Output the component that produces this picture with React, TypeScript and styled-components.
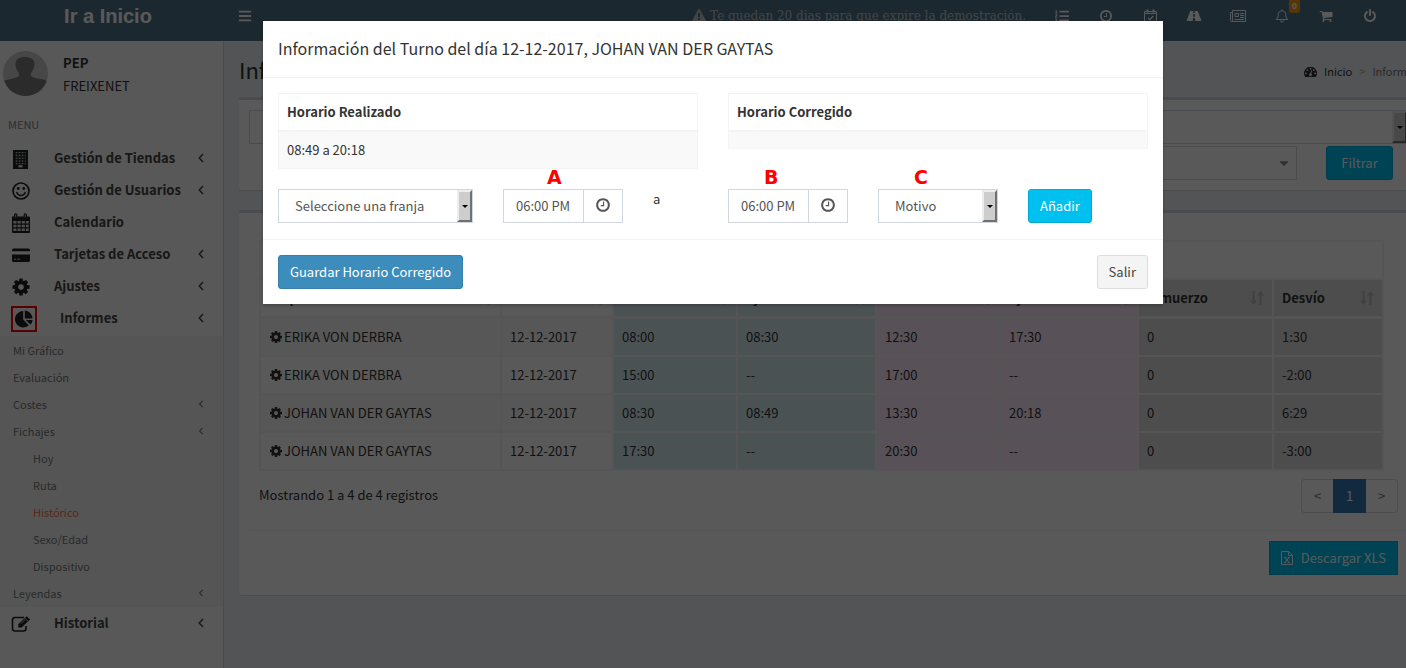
import React from 'react';
import styled, { createGlobalStyle } from 'styled-components';
import { FaBars, FaListOl, FaCaretDown } from 'react-icons/fa';

const Global = createGlobalStyle`
  * { box-sizing: border-box; }
  html, body { margin: 0; min-height: 100%; background: #ecf0f5; overflow: hidden; }
  body, button, input, select {
    font-family: "Noto Sans CJK SC", "Open Sans", sans-serif;
    font-size: 13px;
    line-height: 20px;
    color: #333;
  }
  button, select { margin: 0; cursor: pointer; }
  a { color: inherit; text-decoration: none; }
`;

/* ---------- icons ---------- */

type GlyphProps = { d: string; size?: number };
const Glyph = ({ d, size = 14 }: GlyphProps) => (
  <svg width={size} height={size} viewBox="0 0 1792 1792" fill="currentColor" aria-hidden="true">
    <path d={d} />
  </svg>
);

const COG =
  'M1152 896q0-106-75-181t-181-75-181 75-75 181 75 181 181 75 181-75 75-181zm512-109v222q0 12-8 23t-20 13l-185 28q-19 54-39 91 35 50 107 138 10 12 10 25t-9 23q-27 37-99 108t-94 71q-12 0-26-9l-138-108q-44 23-91 38-16 136-29 186-7 28-36 28H785q-14 0-24.500-8.500T749 1635l-28-184q-49-16-90-37l-141 107q-10 9-25 9-14 0-25-11-126-114-165-168-7-10-7-23 0-12 8-23 15-21 51-66.500t54-70.500q-27-50-41-99l-183-27q-13-2-21-12.500t-8-23.500V783q0-12 8-23t19-13l186-28q14-46 39-92-40-57-107-138-10-12-10-24 0-10 9-23 26-36 98.500-107.500T465 263q13 0 26 10l138 107q44-23 91-38 16-136 29-186 7-28 36-28h222q14 0 24.500 8.500T1043 157l28 184q49 16 90 37l142-107q9-9 24-9 13 0 25 10 129 119 165 170 7 8 7 22 0 12-8 23-15 21-51 66.500t-54 70.500q26 50 41 98l183 28q13 2 21 12.500t8 23.500z';
const CLOCK =
  'M1024 544v448q0 14-9 23t-23 9H672q-14 0-23-9t-9-23v-64q0-14 9-23t23-9h224V544q0-14 9-23t23-9h64q14 0 23 9t9 23zm416 352q0-148-73-273t-198-198-273-73-273 73-198 198-73 273 73 273 198 198 273 73 273-73 198-198 73-273zm224 0q0 209-103 385.500T1281.500 1561 896 1664t-385.500-103T231 1281.500 128 896t103-385.500T510.500 231 896 128t385.500 103T1561 510.500 1664 896z';
const WARNING =
  'M1024 1375v-190q0-14-9.500-23.500T992 1152H800q-13 0-22.500 9.500T768 1185v190q0 14 9.500 23.500t22.500 9.500h192q13 0 22.500-9.500t9.500-23.500zm-2-374l18-459q0-12-10-19-13-11-24-11H786q-11 0-24 11-10 7-10 21l17 457q0 10 10 16.500t24 6.500h185q14 0 23.500-6.500t10.500-16.500zm-14-934l768 1408q35 63-2 126-17 29-46.500 46t-63.500 17H128q-34 0-63.500-17T18 1601q-37-63-2-126L784 67q17-31 47-49t65-18 65 18 47 49z';
const CART =
  'M704 1536q0 52-38 90t-90 38-90-38-38-90 38-90 90-38 90 38 38 90zm896 0q0 52-38 90t-90 38-90-38-38-90 38-90 90-38 90 38 38 90zm128-1088v512q0 24-16.500 42.500T1671 1024L627 1146q13 60 13 70 0 16-24 64h920q26 0 45 19t19 45-19 45-45 19H512q-26 0-45-19t-19-45q0-11 8-31.500t16-36 21.500-40T509 1207L332 384H128q-26 0-45-19t-19-45 19-45 45-19h256q16 0 28.500 6.500T432 278t13 24.500 8 26 5.500 29.500 4.500 26h1201q26 0 45 19t19 45z';
const POWER =
  'M1664 896q0 156-61 298t-164 245-245 164-298 61-298-61-245-164-164-245-61-298q0-182 80.500-343T435 283q43-32 95.500-25t83.500 50q32 42 24.500 94.500T589 489q-98 74-151.500 181T384 896q0 104 40.500 198.500T534 1258t163.500 109.500T896 1408t198.500-40.500T1258 1258t109.500-163.500T1408 896q0-119-53.500-226T1203 489q-42-33-49.500-85.500T1178 309q31-43 84-50t95 25q127 96 207.500 257t80.500 343zM1024 128v640q0 52-38 90t-90 38-90-38-38-90V128q0-52 38-90t90-38 90 38 38 90z';
const GAUGE =
  'M384 1152q0-53-37.500-90.500T256 1024t-90.500 37.500T128 1152t37.500 90.500T256 1280t90.500-37.500T384 1152zm192-448q0-53-37.500-90.500T448 576t-90.500 37.500T320 704t37.500 90.500T448 832t90.500-37.500T576 704zm428 481l101-382q6-26-7.500-48.500T1059 725t-48 6.500-30 39.500l-101 382q-60 5-107 43.500t-63 98.500q-20 77 20 146t117 89 146-20 89-117q16-60-6-117t-72-91zm660-33q0-53-37.500-90.500T1536 1024t-90.500 37.500-37.500 90.500 37.500 90.500 90.500 37.500 90.500-37.500 37.500-90.500zm-640-640q0-53-37.500-90.500T896 384t-90.500 37.500T768 512t37.500 90.500T896 640t90.500-37.500T1024 512zm448 192q0-53-37.500-90.500T1344 576t-90.500 37.500T1216 704t37.500 90.500T1344 832t90.500-37.500T1472 704zm320 448q0 261-141 483-19 29-54 29H195q-35 0-54-29Q0 1414 0 1152q0-182 71-348t191-286 286-191 348-71 348 71 286 191 191 286 71 348z';

const BellIcon = () => (
  <svg width="14" height="14" viewBox="0 0 14 14" fill="none" stroke="currentColor" aria-hidden="true">
    <path d="M1.200 10.500C2.800 9 3.200 7.500 3.200 5.500C3.200 3.200 4.800 1.900 7 1.900s3.800 1.300 3.800 3.600c0 2 .4 3.500 2 5z" strokeLinejoin="round" />
    <path d="M7 .4v1.400M5.500 11.500a1.500 1.500 0 0 0 3 0" />
  </svg>
);

const RoadIcon = () => (
  <svg width="16" height="12" viewBox="0 0 16 12" fill="currentColor" aria-hidden="true">
    <path d="M4.300 1h3v2h1.400V1h3L15.500 11H9.200L9 8H7l-.2 3H.5zM7.200 4L7 6.800h2L8.800 4z" fillRule="evenodd" />
  </svg>
);

const CheckCalendarIcon = () => (
  <svg width="13" height="14" viewBox="0 0 13 14" fill="none" stroke="currentColor" aria-hidden="true">
    <path d="M.5 2.500h12v11H.5zM.5 4.500h12" />
    <path d="M3.500.5v3M9.500.5v3" strokeWidth="2" />
    <path d="M4 8.800l1.800 1.800L9.300 7" strokeWidth="1.200" />
  </svg>
);

const NewsIcon = () => (
  <svg width="16" height="12" viewBox="0 0 16 12" fill="none" stroke="currentColor" aria-hidden="true">
    <path d="M2.500.5h13v11h-14q-1 0-1-1V2.500h2zM2.500 2.500v8q0 1-1 1" />
    <path d="M5 3.500h3.500v3H5zM10 3.500h4M10 5.500h4M10 7.500h4M4.500 9.500h9.500" />
  </svg>
);

const SheetIcon = () => (
  <svg width="12" height="14" viewBox="0 0 12 14" fill="none" stroke="currentColor" aria-hidden="true">
    <path d="M.5.5h7.200l3.800 3.800v9.200H.5zM7.500.5v4h4" />
    <path d="M4 6.500l4 5M8 6.500l-4 5M3.200 6.500h2M6.800 6.500h2M3.200 11.500h2M6.800 11.500h2" />
  </svg>
);

const AngleIcon = ({ small }: { small?: boolean }) => (
  <svg width="6" height={small ? 8 : 10} viewBox="0 0 6 10" fill="none" stroke="currentColor" strokeWidth="1.400" aria-hidden="true">
    <path d="M5 1L1.200 5 5 9" />
  </svg>
);

const SmileIcon = () => (
  <svg width="18" height="18" viewBox="0 0 18 18" fill="none" aria-hidden="true">
    <circle cx="9" cy="9" r="8" stroke="currentColor" strokeWidth="1.700" />
    <circle cx="6.200" cy="6.500" r="1.400" fill="currentColor" />
    <circle cx="11.800" cy="6.500" r="1.400" fill="currentColor" />
    <path d="M4.800 10.500q1.200 3 4.200 3t4.200-3" stroke="currentColor" strokeWidth="1.500" strokeLinecap="round" />
  </svg>
);

const BuildingIcon = () => (
  <svg width="20" height="20" viewBox="0 0 20 20" aria-hidden="true">
    <path fill="currentColor" d="M2 1h15v19H2z" />
    <path
      stroke="#b9c4c9"
      strokeWidth="1.300"
      strokeDasharray="1.700 1.300"
      d="M4.700 3.700h10M4.700 6.500h10M4.700 9.300h10M4.700 12.100h10M4.700 14.700h10"
    />
    <path fill="#e8eceb" d="M7.500 16.200h4v2.200h-4z" />
  </svg>
);

const CalendarIcon = () => (
  <svg width="20" height="20" viewBox="0 0 20 20" aria-hidden="true">
    <path fill="currentColor" d="M1 3.500h2V2a1.600 1.600 0 0 1 3.400 0v1.500h6.200V2A1.600 1.600 0 0 1 16 2v1.500h2q1 0 1 1V19q0 1-1 1H2q-1 0-1-1z" />
    <path stroke="#dde2e0" strokeWidth="2.600" strokeDasharray="3.200 1" d="M2.300 9.200h15.500M2.300 13h15.500M2.300 16.800h15.500" />
    <path stroke="#dde2e0" strokeWidth=".8" d="M4.700 1.500v3M14.300 1.500v3" />
  </svg>
);

const CardIcon = () => (
  <svg width="20" height="20" viewBox="0 0 20 20" aria-hidden="true">
    <path fill="currentColor" d="M1 6.200V5q0-1.500 1.500-1.500h15Q19 3.500 19 5v1.200zM1 9.500h18v6q0 1.500-1.500 1.500h-15Q1 17 1 15.500z" />
    <path stroke="#cfd4d2" d="M3 14.200h2M6.200 14.200h3" />
  </svg>
);

const PieIcon = () => (
  <svg width="18" height="18" viewBox="0 0 18 18" fill="currentColor" aria-hidden="true">
    <path d="M8.200 1v8.600l5.600 5.600A8.200 8.200 0 1 1 8.200 1z" />
    <path d="M9.800.600a8 8 0 0 1 7.600 8H9.800z" />
    <path d="M10.800 9.900h6.800a7 7 0 0 1-2.200 4.700z" />
  </svg>
);

const EditIcon = () => (
  <svg width="20" height="20" viewBox="0 0 20 20" fill="none" aria-hidden="true">
    <path d="M13 3.500H4Q1.500 3.500 1.500 6v8.500Q1.500 17 4 17h8.500q2.500 0 2.500-2.500V12" stroke="currentColor" strokeWidth="1.600" />
    <path fill="currentColor" d="M15.600 2.200l3.400 3.200-8.400 8H7.300v-3.200z" />
    <path stroke="#e4e8e6" strokeWidth=".8" d="M13.600 4l3.400 3.200M10 9.500l4-3.800" />
  </svg>
);

const SortIcon = () => (
  <svg width="14" height="16" viewBox="0 0 14 16" fill="currentColor" aria-hidden="true">
    <path d="M2.500 1h2v9.500H7L3.500 15 0 10.500h2.500zM9.500 15h2V5.500H14L10.500 1 7 5.500h2.500z" />
  </svg>
);

const AvatarPicture = () => (
  <svg width="45" height="45" viewBox="0 0 45 45" role="img" aria-label="PEP">
    <defs>
      <clipPath id="avatar-round"><circle cx="22.500" cy="22.500" r="22.500" /></clipPath>
    </defs>
    <g clipPath="url(#avatar-round)">
      <path fill="#cbcbcb" d="M0 0h45v45H0z" />
      <path
        fill="#7c7c7c"
        d="M12.500 13c0-5 4-7 9.500-7s9.500 2 9.500 7c0 3-1.200 6-3.200 8.500-.8 1-.8 3.300.5 4.300 3 1.500 10 2 14 3.700L45 31v14H0V30c4-1.500 12-2.500 15-4.200 1.500-1 1.300-3.300.5-4.300-2-2.500-3-5.500-3-8.500z"
      />
    </g>
  </svg>
);

/* ---------- page frame ---------- */

const Viewport = styled.div`
  height: 100vh;
  overflow: hidden;
  position: relative;
`;
const Page = styled.div`
  width: calc(100% + 20px);
  min-height: 100vh;
  display: flex;
  flex-direction: column;
`;
const TopBar = styled.header`
  display: flex;
  height: 41px;
  padding-bottom: 9px;
  align-items: center;
  background: #50748a;
  color: #fff;
`;
const Brand = styled.a`
  width: 216px;
  flex: none;
  text-align: center;
  font: bold 20px/30px "Liberation Sans", Arial, sans-serif;
`;
const ToggleButton = styled.button`
  display: flex;
  margin-left: 14px;
  padding: 8px;
  border: 0;
  background: none;
  color: inherit;
`;
const Notice = styled.p`
  display: flex;
  align-items: center;
  gap: 4px;
  margin: 0 14px 0 auto;
  color: #c4c4c4;
  font: 12px/20px "DejaVu Serif", serif;
  white-space: nowrap;
`;
const TopIcons = styled.nav`
  display: flex;
  padding-right: 34px;
`;
const TopLink = styled.a`
  position: relative;
  display: flex;
  align-items: center;
  justify-content: center;
  width: 44px;
`;
const Badge = styled.span`
  position: absolute;
  top: -10px;
  right: 4px;
  padding: 0 3px;
  border-radius: 3px;
  background: #f39c12;
  font: bold 9px/14px "Liberation Sans", Arial, sans-serif;
`;
const Columns = styled.div`
  display: flex;
  flex: 1;
`;

/* ---------- sidebar ---------- */

const Sidebar = styled.aside`
  flex: none;
  width: 224px;
  border-right: 1px solid #d2d6de;
  background: #f9fbfa;
`;
const UserPanel = styled.div`
  display: flex;
  gap: 15px;
  padding: 10px 3px 6px;
`;
const UserText = styled.div`
  display: flex;
  flex-direction: column;
  gap: 3px;
  padding-top: 2px;
`;
const MenuHeading = styled.div`
  padding: 12px 8px 8px;
  font-size: 11px;
  line-height: 20px;
  color: #848484;
`;
const MenuLink = styled.a`
  display: flex;
  align-items: center;
  height: 32px;
  padding: 0 19px 0 11px;
  font-weight: 700;
  color: #444;
  white-space: nowrap;
  svg { flex: none; }
`;
const MenuIcon = styled.span<{ $marked?: boolean }>`
  display: flex;
  align-items: center;
  justify-content: center;
  flex: none;
  width: ${(p) => (p.$marked ? 26 : 20)}px;
  height: ${(p) => (p.$marked ? 26 : 20)}px;
  margin: 2px 23px 0 0;
  border: ${(p) => (p.$marked ? '2px solid #f00' : '0')};
  color: #222;
`;
const MenuText = styled.span`
  flex: 1;
`;
const SubMenu = styled.nav`
  margin-top: 2px;
  padding-bottom: 1px;
  background: #f4f4f5;
`;
const SubLink = styled.a<{ $deep?: boolean; $active?: boolean }>`
  display: flex;
  align-items: center;
  justify-content: space-between;
  height: 27px;
  padding: 0 19px 0 ${(p) => (p.$deep ? 33 : 13)}px;
  font-size: 11px;
  color: ${(p) => (p.$active ? '#ff7043' : '#777')};
`;

/* ---------- main area ---------- */

const Main = styled.main`
  flex: 1;
  min-width: 0;
  padding: 0 5px 0 15px;
  background: #ecf0f5;
`;
const TitleRow = styled.div`
  display: flex;
  align-items: center;
  justify-content: space-between;
  height: 56px;
`;
const PageTitle = styled.h1`
  margin: 0;
  font-size: 22px;
  line-height: 30px;
  font-weight: 400;
`;
const Crumbs = styled.nav`
  display: flex;
  flex: none;
  align-items: center;
  gap: 7px;
  width: 117px;
  padding-top: 4px;
  font-size: 11px;
  white-space: nowrap;
`;
const CrumbDim = styled.span<{ $faint?: boolean }>`
  color: ${(p) => (p.$faint ? '#aaa' : '#777')};
`;
const Panel = styled.section`
  margin-bottom: 20px;
  padding: 10px;
  border-top: 3px solid #d2d6de;
  border-radius: 3px;
  background: #fff;
  box-shadow: 0 1px 1px rgba(0, 0, 0, 0.1);
`;
const FilterPanel = styled(Panel)`
  padding-right: 13px;
`;
const FilterRow = styled.div`
  display: flex;
  justify-content: flex-end;
  gap: 29px;
  padding-right: 15px;
  margin-top: 2px;
`;
const PickerBox = styled.button`
  display: flex;
  align-items: center;
  justify-content: flex-end;
  width: 420px;
  height: 34px;
  padding: 0 5px;
  border: 1px solid #d2d6de;
  background: #fff;
  color: #888;
`;
const ListPanel = styled(Panel)`
  padding: 27px 10px 20px;
`;
const DataTable = styled.table`
  width: calc(100% - 37px);
  margin-left: 10px;
  table-layout: fixed;
  border: 1px solid #f4f4f4;
  border-collapse: separate;
  border-spacing: 0;
`;
const tones = { none: 'transparent', blue: '#d6ecf0', pink: '#fce8fa', gray: '#dcdcdc' };
type Tone = keyof typeof tones;
const HeadCell = styled.th<{ $tone?: Tone }>`
  height: 38px;
  padding: 0 8px;
  border: 1px solid #f4f4f4;
  background: ${(p) => tones[p.$tone || 'none']};
  background-clip: padding-box;
  text-align: left;
  font-weight: 700;
`;
const HeadInner = styled.span`
  display: flex;
  align-items: center;
  justify-content: space-between;
  svg { opacity: 0.2; }
`;
const BodyRow = styled.tr`
  &:nth-child(odd) { background: #f9f9f9; }
  &:first-child td { border-top-width: 2px; height: 39px; }
`;
const BodyCell = styled.td<{ $tone?: Tone }>`
  height: 38px;
  padding: 0 8px;
  border: 1px solid #f4f4f4;
  background: ${(p) => tones[p.$tone || 'none']};
  background-clip: padding-box;
`;
const CellLink = styled.a`
  display: flex;
  align-items: center;
  gap: 1px;
`;
const TableFooter = styled.div`
  display: flex;
  justify-content: space-between;
  padding: 8px 13px 17px 10px;
`;
const Summary = styled.p`
  margin: 0;
  padding-top: 6px;
`;
const Pager = styled.nav`
  display: flex;
`;
const PageButton = styled.button<{ $active?: boolean; $side?: 'start' | 'end' }>`
  width: ${(p) => (p.$active ? 33 : 32)}px;
  height: 34px;
  padding: 0;
  border: 1px solid ${(p) => (p.$active ? '#337ab7' : '#ddd')};
  border-left-width: ${(p) => (p.$side === 'end' ? 0 : 1)}px;
  border-right-width: ${(p) => (p.$side === 'start' ? 0 : 1)}px;
  border-radius: ${(p) => (p.$side === 'start' ? '4px 0 0 4px' : p.$side === 'end' ? '0 4px 4px 0' : '0')};
  background: ${(p) => (p.$active ? '#337ab7' : '#fff')};
  color: ${(p) => (p.$active ? '#fff' : '#777')};
`;
const Actions = styled.div`
  display: flex;
  justify-content: flex-end;
  padding: 10px 13px 0 0;
  border-top: 1px solid #f4f4f4;
`;

const buttonKinds = {
  info: { bg: '#00c0ef', line: '#00acd6', text: '#fff' },
  primary: { bg: '#3c8dbc', line: '#367fa9', text: '#fff' },
  plain: { bg: '#f4f4f4', line: '#ddd', text: '#444' },
};
const Button = styled.button<{ $kind: keyof typeof buttonKinds; $square?: boolean }>`
  display: inline-flex;
  align-items: center;
  justify-content: center;
  gap: 8px;
  height: 34px;
  padding: 0 11px;
  border: 1px solid ${(p) => buttonKinds[p.$kind].line};
  border-radius: ${(p) => (p.$square ? 0 : 3)}px;
  background: ${(p) => buttonKinds[p.$kind].bg};
  color: ${(p) => buttonKinds[p.$kind].text};
  white-space: nowrap;
`;
const FilterButton = styled(Button)`
  width: 67px;
`;

/* ---------- drop-down ---------- */

const SelectFrame = styled.div`
  position: relative;
  height: 34px;
`;
const NativeSelect = styled.select`
  appearance: none;
  display: block;
  width: 100%;
  height: 34px;
  padding: 0 20px 0 16px;
  border: 1px solid #d2d6de;
  border-radius: 0;
  background: #fff;
  color: #555;
`;
const SelectArrow = styled.span`
  position: absolute;
  top: 1px;
  right: 1px;
  bottom: 1px;
  display: flex;
  align-items: center;
  justify-content: center;
  width: 15px;
  border-style: solid;
  border-width: 2px;
  border-color: #ededed #707070 #707070 #ededed;
  background: #cdcdcd;
  pointer-events: none;
  &::after {
    content: '';
    border: 3px solid transparent;
    border-top-color: #000;
    border-bottom-width: 0;
  }
`;
type DropProps = { id: string; text: string; label?: string };
const DropDown = ({ id, text, label }: DropProps) => (
  <SelectFrame>
    <NativeSelect id={id} aria-label={label}>
      <option>{text}</option>
    </NativeSelect>
    <SelectArrow />
  </SelectFrame>
);

/* ---------- dialog ---------- */

const Backdrop = styled.div`
  position: absolute;
  inset: 0 -20px 0 0;
  padding-top: 21px;
  background: rgba(0, 0, 0, 0.65);
`;
const Dialog = styled.div`
  max-width: 900px;
  margin: 0 auto;
  background: #fff;
  box-shadow: 0 2px 3px rgba(0, 0, 0, 0.2);
`;
const DialogHeader = styled.header`
  padding: 14px 15px 16px;
  border-bottom: 1px solid #f4f4f4;
`;
const DialogTitle = styled.h2`
  margin: 0;
  font-size: 16px;
  line-height: 26px;
  font-weight: 400;
`;
const DialogBody = styled.div`
  padding: 15px 15px 16px;
`;
const Pair = styled.div`
  display: grid;
  grid-template-columns: 1fr 1fr;
  align-items: start;
  gap: 30px;
`;
const HoursTable = styled.table`
  width: 100%;
  border: 1px solid #f4f4f4;
  border-collapse: collapse;
  th, td { padding: 8px; text-align: left; line-height: 20px; }
  th { border-bottom: 2px solid #f4f4f4; }
  td { background: #f9f9f9; }
`;
const FormGrid = styled.form`
  display: grid;
  grid-template-columns: repeat(12, minmax(0, 1fr));
  column-gap: 30px;
`;
const Field = styled.div<{ $span: number }>`
  grid-column: span ${(p) => p.$span};
  padding-top: ${(p) => (p.$span === 1 ? 20 : 0)}px;
`;
const Mark = styled.label<{ $indent: number }>`
  display: block;
  height: 20px;
  padding-left: ${(p) => p.$indent}px;
  color: #f00;
  font: bold 19px/16px "DejaVu Sans", sans-serif;
`;
const TimeBox = styled.div`
  display: flex;
  height: 34px;
  border: 1px solid #d2d6de;
`;
const TimeInput = styled.input`
  flex: 1;
  min-width: 0;
  padding: 0 0 0 12px;
  border: 0;
  color: #555;
`;
const TimeButton = styled.button`
  display: flex;
  align-items: center;
  justify-content: center;
  width: 39px;
  padding: 0 0 2px;
  border: 0;
  border-left: 1px solid #d2d6de;
  background: #fff;
  color: #555;
`;
const DialogFooter = styled.footer`
  display: flex;
  justify-content: space-between;
  padding: 15px;
  border-top: 1px solid #f4f4f4;
`;

const TimeField = ({ id, mark, indent }: { id: string; mark: string; indent: number }) => (
  <Field $span={2}>
    <Mark htmlFor={id} $indent={indent}>{mark}</Mark>
    <TimeBox>
      <TimeInput id={id} defaultValue="06:00 PM" />
      <TimeButton type="button" aria-label="Elegir hora"><Glyph d={CLOCK} size={16} /></TimeButton>
    </TimeBox>
  </Field>
);

/* ---------- data ---------- */

const menu = [
  { text: 'Gestión de Tiendas', icon: <BuildingIcon />, open: true },
  { text: 'Gestión de Usuarios', icon: <SmileIcon />, open: true },
  { text: 'Calendario', icon: <CalendarIcon />, open: false },
  { text: 'Tarjetas de Acceso', icon: <CardIcon />, open: true },
  { text: 'Ajustes', icon: <Glyph d={COG} size={20} />, open: true },
];
const subMenu = [
  { text: 'Mi Gráfico' },
  { text: 'Evaluación' },
  { text: 'Costes', open: true },
  { text: 'Fichajes', open: true },
  { text: 'Hoy', deep: true },
  { text: 'Ruta', deep: true },
  { text: 'Histórico', deep: true, active: true },
  { text: 'Sexo/Edad', deep: true },
  { text: 'Dispositivo', deep: true },
  { text: 'Leyendas', open: true },
];
const columns: { text: string; tone: Tone; width?: number }[] = [
  { text: 'Empleado', tone: 'none' },
  { text: 'Fecha', tone: 'none', width: 112 },
  { text: 'Entrada', tone: 'blue', width: 124 },
  { text: 'Ajuste', tone: 'blue', width: 139 },
  { text: 'Salida', tone: 'pink', width: 124 },
  { text: 'Ajuste', tone: 'pink', width: 138 },
  { text: 'Almuerzo', tone: 'gray', width: 135 },
  { text: 'Desvío', tone: 'gray', width: 110 },
];
const rows = [
  ['ERIKA VON DERBRA', '12-12-2017', '08:00', '08:30', '12:30', '17:30', '0', '1:30'],
  ['ERIKA VON DERBRA', '12-12-2017', '15:00', '--', '17:00', '--', '0', '-2:00'],
  ['JOHAN VAN DER GAYTAS', '12-12-2017', '08:30', '08:49', '13:30', '20:18', '0', '6:29'],
  ['JOHAN VAN DER GAYTAS', '12-12-2017', '17:30', '--', '20:30', '--', '0', '-3:00'],
];

export default function App() {
  return (
    <Viewport>
      <Global />
      <Page>
        <TopBar>
          <Brand href="#inicio">Ir a Inicio</Brand>
          <ToggleButton type="button" aria-label="Menú"><FaBars size={14} /></ToggleButton>
          <Notice><Glyph d={WARNING} />Te quedan 20 dias para que expire la demostración.</Notice>
          <TopIcons>
            <TopLink href="#lista" aria-label="Lista"><FaListOl size={14} /></TopLink>
            <TopLink href="#reloj" aria-label="Reloj"><Glyph d={CLOCK} /></TopLink>
            <TopLink href="#agenda" aria-label="Agenda"><CheckCalendarIcon /></TopLink>
            <TopLink href="#rutas" aria-label="Rutas"><RoadIcon /></TopLink>
            <TopLink href="#noticias" aria-label="Noticias"><NewsIcon /></TopLink>
            <TopLink href="#avisos" aria-label="Avisos"><BellIcon /><Badge>0</Badge></TopLink>
            <TopLink href="#compras" aria-label="Compras"><Glyph d={CART} /></TopLink>
            <TopLink href="#salir" aria-label="Cerrar sesión"><Glyph d={POWER} /></TopLink>
          </TopIcons>
        </TopBar>
        <Columns>
          <Sidebar>
            <UserPanel>
              <AvatarPicture />
              <UserText>
                <strong>PEP</strong>
                <span>FREIXENET</span>
              </UserText>
            </UserPanel>
            <MenuHeading>MENU</MenuHeading>
            {menu.map((m) => (
              <MenuLink key={m.text} href="#menu">
                <MenuIcon>{m.icon}</MenuIcon>
                <MenuText>{m.text}</MenuText>
                {m.open && <AngleIcon />}
              </MenuLink>
            ))}
            <MenuLink href="#informes">
              <MenuIcon $marked><PieIcon /></MenuIcon>
              <MenuText>Informes</MenuText>
              <AngleIcon />
            </MenuLink>
            <SubMenu>
              {subMenu.map((s) => (
                <SubLink key={s.text} href="#sub" $deep={s.deep} $active={s.active}>
                  {s.text}
                  {s.open && <AngleIcon small />}
                </SubLink>
              ))}
            </SubMenu>
            <MenuLink href="#historial">
              <MenuIcon><EditIcon /></MenuIcon>
              <MenuText>Historial</MenuText>
              <AngleIcon />
            </MenuLink>
          </Sidebar>
          <Main>
            <TitleRow>
              <PageTitle>Informes</PageTitle>
              <Crumbs>
                <Glyph d={GAUGE} size={13} />
                <a href="#inicio">Inicio</a>
                <CrumbDim $faint>&gt;</CrumbDim>
                <CrumbDim>Informes</CrumbDim>
              </Crumbs>
            </TitleRow>
            <FilterPanel>
              <DropDown id="tienda" text="" label="Tienda" />
              <FilterRow>
                <PickerBox type="button" aria-label="Empleado"><FaCaretDown size={14} /></PickerBox>
                <FilterButton type="button" $kind="info">Filtrar</FilterButton>
              </FilterRow>
            </FilterPanel>
            <ListPanel>
              <DataTable>
                <colgroup>
                  {columns.map((c, i) => <col key={i} width={c.width} />)}
                </colgroup>
                <thead>
                  <tr><HeadCell colSpan={8} /></tr>
                  <tr>
                    {columns.map((c, i) => (
                      <HeadCell key={i} $tone={c.tone}>
                        <HeadInner>{c.text}<SortIcon /></HeadInner>
                      </HeadCell>
                    ))}
                  </tr>
                </thead>
                <tbody>
                  {rows.map((r, i) => (
                    <BodyRow key={i}>
                      {r.map((value, j) => (
                        <BodyCell key={j} $tone={columns[j].tone}>
                          {j === 0 ? <CellLink href="#turno"><Glyph d={COG} />{value}</CellLink> : value}
                        </BodyCell>
                      ))}
                    </BodyRow>
                  ))}
                </tbody>
              </DataTable>
              <TableFooter>
                <Summary>Mostrando 1 a 4 de 4 registros</Summary>
                <Pager>
                  <PageButton type="button" $side="start">&lt;</PageButton>
                  <PageButton type="button" $active>1</PageButton>
                  <PageButton type="button" $side="end">&gt;</PageButton>
                </Pager>
              </TableFooter>
              <Actions>
                <Button type="button" $kind="info" $square><SheetIcon />Descargar XLS</Button>
              </Actions>
            </ListPanel>
          </Main>
        </Columns>
      </Page>
      <Backdrop>
        <Dialog role="dialog" aria-labelledby="turno-titulo">
          <DialogHeader>
            <DialogTitle id="turno-titulo">
              Información del Turno del día 12-12-2017, JOHAN VAN DER GAYTAS
            </DialogTitle>
          </DialogHeader>
          <DialogBody>
            <Pair>
              <HoursTable>
                <thead><tr><th>Horario Realizado</th></tr></thead>
                <tbody><tr><td>08:49 a 20:18</td></tr></tbody>
              </HoursTable>
              <HoursTable>
                <thead><tr><th>Horario Corregido</th></tr></thead>
                <tbody><tr><td /></tr></tbody>
              </HoursTable>
            </Pair>
            <FormGrid>
              <Field $span={3}>
                <Mark as="div" $indent={0} />
                <DropDown id="franja" text="Seleccione una franja" label="Franja" />
              </Field>
              <TimeField id="desde" mark="A" indent={44} />
              <Field $span={1}>a</Field>
              <TimeField id="hasta" mark="B" indent={36} />
              <Field $span={2}>
                <Mark htmlFor="motivo" $indent={36}>C</Mark>
                <DropDown id="motivo" text="Motivo" />
              </Field>
              <Field $span={1}><Button type="button" $kind="info">Añadir</Button></Field>
            </FormGrid>
          </DialogBody>
          <DialogFooter>
            <Button type="button" $kind="primary">Guardar Horario Corregido</Button>
            <Button type="button" $kind="plain">Salir</Button>
          </DialogFooter>
        </Dialog>
      </Backdrop>
    </Viewport>
  );
}
